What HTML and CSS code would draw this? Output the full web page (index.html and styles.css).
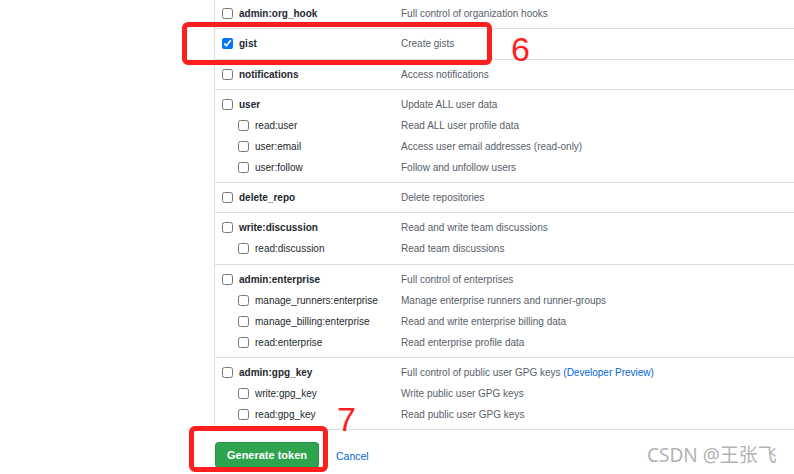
FILE: index.html
```html
<!DOCTYPE html>
<html>
<head>
<meta charset="utf-8">
<link rel="stylesheet" href="styles.css">
</head>
<body>
<div class="page">
  <div class="scopes">
    <div class="group">
      <div class="row"><label class="scope"><input type="checkbox"><span class="name top">admin:org_hook</span></label><span class="desc">Full control of organization hooks</span></div>
    </div>
    <div class="group">
      <div class="row"><label class="scope"><input type="checkbox" checked><span class="name top">gist</span></label><span class="desc">Create gists</span></div>
    </div>
    <div class="group">
      <div class="row"><label class="scope"><input type="checkbox"><span class="name top">notifications</span></label><span class="desc">Access notifications</span></div>
    </div>
    <div class="group">
      <div class="row"><label class="scope"><input type="checkbox"><span class="name top">user</span></label><span class="desc">Update ALL user data</span></div>
      <div class="row"><label class="scope sub"><input type="checkbox"><span class="name">read:user</span></label><span class="desc">Read ALL user profile data</span></div>
      <div class="row"><label class="scope sub"><input type="checkbox"><span class="name">user:email</span></label><span class="desc">Access user email addresses (read-only)</span></div>
      <div class="row"><label class="scope sub"><input type="checkbox"><span class="name">user:follow</span></label><span class="desc">Follow and unfollow users</span></div>
    </div>
    <div class="group">
      <div class="row"><label class="scope"><input type="checkbox"><span class="name top">delete_repo</span></label><span class="desc">Delete repositories</span></div>
    </div>
    <div class="group">
      <div class="row"><label class="scope"><input type="checkbox"><span class="name top">write:discussion</span></label><span class="desc">Read and write team discussions</span></div>
      <div class="row"><label class="scope sub"><input type="checkbox"><span class="name">read:discussion</span></label><span class="desc">Read team discussions</span></div>
    </div>
    <div class="group">
      <div class="row"><label class="scope"><input type="checkbox"><span class="name top">admin:enterprise</span></label><span class="desc">Full control of enterprises</span></div>
      <div class="row"><label class="scope sub"><input type="checkbox"><span class="name">manage_runners:enterprise</span></label><span class="desc">Manage enterprise runners and runner-groups</span></div>
      <div class="row"><label class="scope sub"><input type="checkbox"><span class="name">manage_billing:enterprise</span></label><span class="desc">Read and write enterprise billing data</span></div>
      <div class="row"><label class="scope sub"><input type="checkbox"><span class="name">read:enterprise</span></label><span class="desc">Read enterprise profile data</span></div>
    </div>
    <div class="group">
      <div class="row"><label class="scope"><input type="checkbox"><span class="name top">admin:gpg_key</span></label><span class="desc">Full control of public user GPG keys <a class="link" href="#">(Developer Preview)</a></span></div>
      <div class="row"><label class="scope sub"><input type="checkbox"><span class="name">write:gpg_key</span></label><span class="desc">Write public user GPG keys</span></div>
      <div class="row"><label class="scope sub"><input type="checkbox"><span class="name">read:gpg_key</span></label><span class="desc">Read public user GPG keys</span></div>
    </div>
  </div>
  <div class="actions">
    <button class="btn-primary" type="button">Generate token</button>
    <a class="cancel" href="#">Cancel</a>
  </div>

  <div class="mark mark-gist"></div>
  <div class="num num-6">6</div>
  <div class="mark mark-btn"></div>
  <div class="num num-7">7</div>
  <div class="watermark">CSDN @王张飞</div>
</div>
</body>
</html>
```

FILE: styles.css
```css
html, body {
  margin: 0;
  padding: 0;
  background: #ffffff;
}
body {
  width: 794px;
  height: 474px;
  overflow: hidden;
  font-family: "Liberation Sans", Arial, sans-serif;
  font-size: 10px;
  color: #24292e;
}
.page {
  position: relative;
  width: 794px;
  height: 474px;
}
.scopes {
  margin-left: 214px;
  margin-top: -1px;
  border-left: 1px solid #d8dee4;
}
.group {
  padding: 4px 0 4.3px;
  border-bottom: 1px solid #d8dee4;
}
.row {
  display: flex;
  align-items: center;
  height: 21px;
}
.scope {
  display: flex;
  align-items: center;
  box-sizing: border-box;
  width: 186px;
  padding-left: 7px;
  flex: none;
}
.scope.sub {
  padding-left: 23px;
}
.scope input {
  width: 11px;
  height: 11px;
  margin: 0 6px 0 0;
  accent-color: #0075ff;
}
.name {
  color: #24292e;
  white-space: nowrap;
}
.name.top {
  font-weight: bold;
}
.desc {
  color: #586069;
  white-space: nowrap;
}
.link {
  color: #0366d6;
  text-decoration: none;
}
.actions {
  display: flex;
  align-items: center;
  gap: 17px;
  margin-left: 215px;
  padding-top: 12px;
}
.btn-primary {
  box-sizing: border-box;
  height: 26px;
  width: 104px;
  padding: 0;
  font-family: "Liberation Sans", Arial, sans-serif;
  font-size: 11px;
  font-weight: bold;
  color: #ffffff;
  background: #2ea44f;
  border: 1px solid rgba(27, 31, 35, 0.15);
  border-radius: 4px;
}
.cancel {
  font-size: 10.5px;
  color: #0366d6;
  text-decoration: none;
  padding-top: 2px;
}
.mark {
  position: absolute;
  box-sizing: border-box;
  border: 5px solid #ff1f1f;
  border-radius: 6px;
}
.mark-gist {
  left: 182px;
  top: 23px;
  width: 310px;
  height: 43px;
}
.mark-btn {
  left: 189px;
  top: 427px;
  width: 139px;
  height: 46px;
}
.num {
  position: absolute;
  font-family: "Liberation Sans", Arial, sans-serif;
  font-size: 34px;
  line-height: 34px;
  color: #ff1f1f;
}
.num-6 {
  left: 511px;
  top: 33px;
}
.num-7 {
  left: 337px;
  top: 403px;
}
.watermark {
  position: absolute;
  left: 647px;
  top: 443px;
  font-family: "Noto Sans", "Noto Sans CJK SC", sans-serif;
  font-size: 19px;
  line-height: 26px;
  color: #b3b3b3;
  white-space: nowrap;
}
```
